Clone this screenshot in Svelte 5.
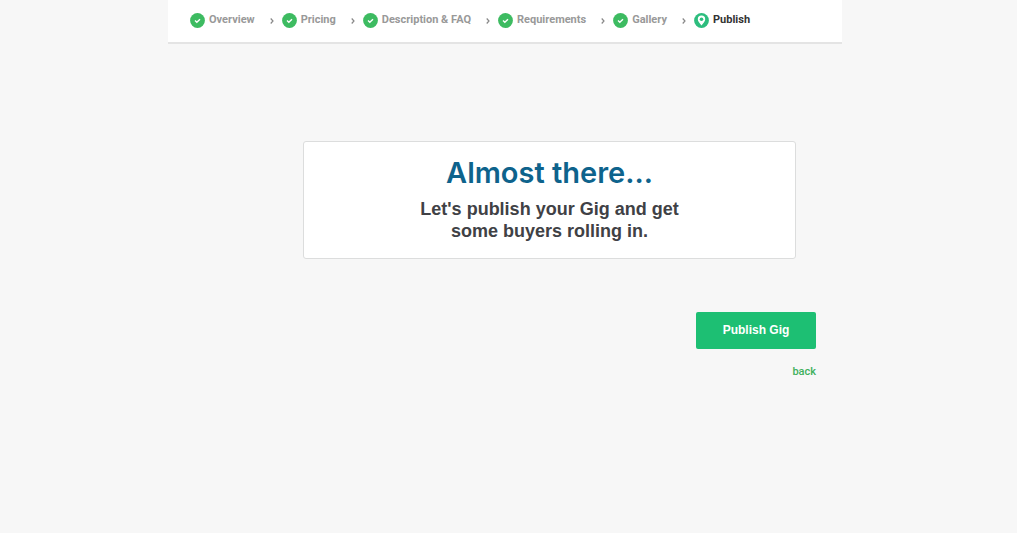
<script>
	const steps = [
		{ name: 'Overview', done: true },
		{ name: 'Pricing', done: true },
		{ name: 'Description & FAQ', done: true },
		{ name: 'Requirements', done: true },
		{ name: 'Gallery', done: true },
		{ name: 'Publish', done: false }
	];
</script>

<div class="page">
	<div class="wizard">
		<nav>
			<ol>
				{#each steps as step, i}
					<li class:current={!step.done}>
						<svg class="badge" viewBox="0 0 15 15" aria-hidden="true">
							{#if step.done}
								<circle cx="7.5" cy="7.5" r="7.4" fill="#3dbb61" />
								<path d="M5 7.6l1.8 1.6 3.2-3" fill="none" stroke="#fff" stroke-width="1.4" />
							{:else}
								<circle cx="7.5" cy="7.5" r="7.4" fill="#2dbd7e" />
								<path d="M7.5 12.6C5.6 9.8 3.8 8.2 3.8 6.2a3.7 3.7 0 0 1 7.4 0c0 2-1.8 3.6-3.7 6.4z" fill="#fff" />
								<circle cx="7.5" cy="6.2" r="1.8" fill="#2dbd7e" />
							{/if}
						</svg>
						<span>{step.name}</span>
						{#if i < steps.length - 1}
							<svg class="chevron" viewBox="0 0 4 6" aria-hidden="true">
								<path d="M.7 .5L3 3 .7 5.5" fill="none" stroke="#888" stroke-width="1.2" />
							</svg>
						{/if}
					</li>
				{/each}
			</ol>
		</nav>

		<main>
			<section>
				<h1>Almost there...</h1>
				<p>Let's publish your Gig and get<br />some buyers rolling in.</p>
			</section>

			<div class="actions">
				<button type="button">Publish Gig</button>
				<a href="#gallery">back</a>
			</div>
		</main>
	</div>
</div>

<style>
	:global(body) {
		margin: 0;
		background: #fff;
	}

	.page {
		box-sizing: border-box;
		min-height: calc(100vh - 20px);
		margin-right: 7px;
		padding-right: 7px;
		background: #f7f7f7;
		font-family: "Liberation Sans", Arial, sans-serif;
	}

	.wizard {
		max-width: 674px;
		margin: 0 auto;
	}

	nav {
		padding: 12px 22px 14px;
		background: #fff;
		border-bottom: 2px solid #e4e4e4;
	}

	ol {
		display: flex;
		margin: 0;
		padding: 0;
		list-style: none;
	}

	li {
		display: flex;
		align-items: center;
		height: 16px;
		color: #999;
		font-family: Roboto, sans-serif;
		font-size: 11px;
		font-weight: bold;
		line-height: 14px;
		white-space: nowrap;
	}

	.current {
		color: #333;
	}

	.badge {
		width: 15px;
		height: 15px;
		margin-right: 4px;
	}

	.chevron {
		width: 4px;
		height: 6px;
		margin: 2px 8px 0 15px;
	}

	main {
		padding: 97px 26px 0;
	}

	section {
		box-sizing: border-box;
		max-width: 493px;
		margin: 0 20px 0 auto;
		padding: 12px 20px 16px;
		background: #fff;
		border: 1px solid #dcdddd;
		border-radius: 3px;
		text-align: center;
	}

	h1 {
		margin: 0 0 6px;
		color: #0e638c;
		font-family: Inter, sans-serif;
		font-size: 29px;
		font-weight: 600;
		line-height: 38px;
	}

	p {
		margin: 0;
		color: #404145;
		font-size: 18px;
		font-weight: bold;
		line-height: 22px;
	}

	.actions {
		display: flex;
		flex-direction: column;
		align-items: flex-end;
		gap: 16px;
		padding-top: 53px;
	}

	button {
		width: 120px;
		height: 37px;
		padding: 0 0 2px;
		color: #fff;
		background: #1dbf73;
		border: 0;
		border-radius: 2px;
		font: bold 12px "Liberation Sans", Arial, sans-serif;
	}

	a {
		color: #3fb05c;
		font-family: Roboto, sans-serif;
		font-size: 11px;
		font-weight: 500;
		line-height: 14px;
		text-decoration: none;
	}
</style>
